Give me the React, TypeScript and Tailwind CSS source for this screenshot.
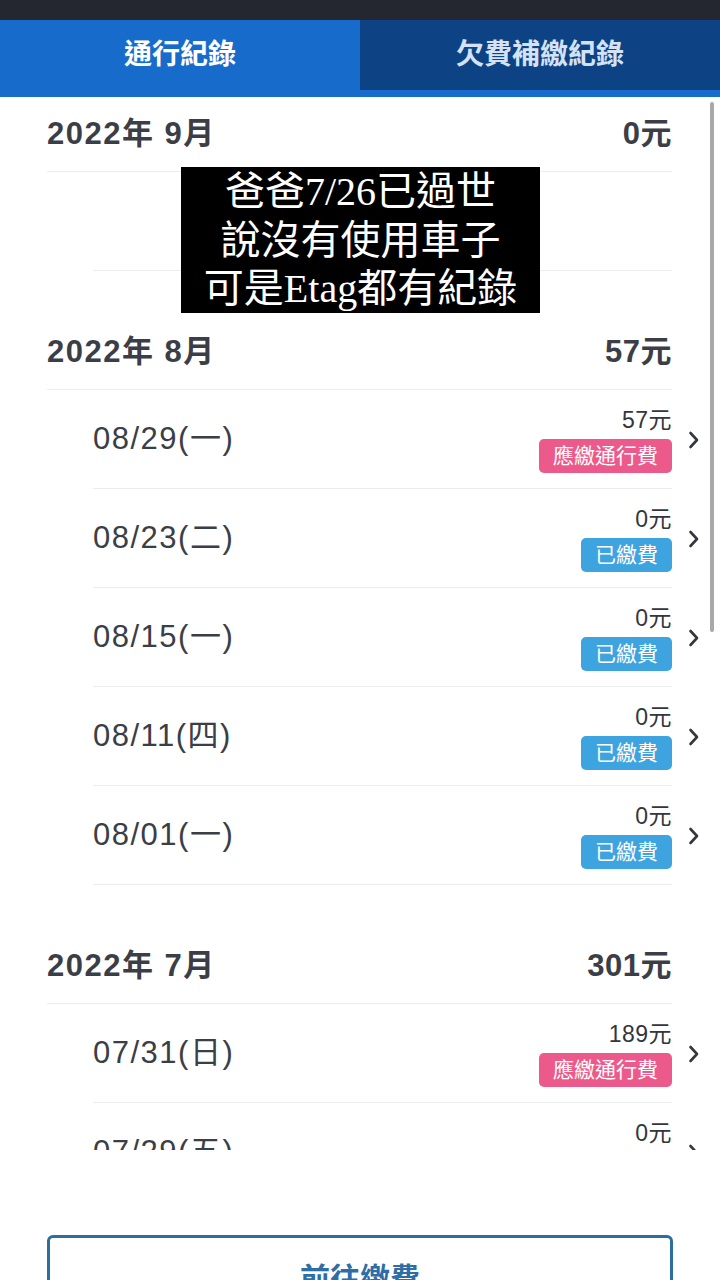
import React from 'react';

type Status = 'due' | 'paid';

interface Trip {
  date: string;
  amount: string;
  status: Status;
}

interface Month {
  label: string;
  total: string;
  trips: (Trip | null)[];
}

const FONT = '"Liberation Sans", "Noto Sans CJK TC", sans-serif';

const MONTHS: Month[] = [
  { label: '2022年 9月', total: '0元', trips: [null] },
  {
    label: '2022年 8月',
    total: '57元',
    trips: [
      { date: '08/29(一)', amount: '57元', status: 'due' },
      { date: '08/23(二)', amount: '0元', status: 'paid' },
      { date: '08/15(一)', amount: '0元', status: 'paid' },
      { date: '08/11(四)', amount: '0元', status: 'paid' },
      { date: '08/01(一)', amount: '0元', status: 'paid' },
    ],
  },
  {
    label: '2022年 7月',
    total: '301元',
    trips: [
      { date: '07/31(日)', amount: '189元', status: 'due' },
      { date: '07/29(五)', amount: '0元', status: 'paid' },
    ],
  },
];

function Chevron() {
  return (
    <svg width="12" height="20" viewBox="0 0 12 20" fill="none">
      <path d="M2.5 3 L9 10 L2.5 17" stroke="#34373d" strokeWidth="2.6" strokeLinecap="round" strokeLinejoin="round" />
    </svg>
  );
}

function Badge({ status }: { status: Status }) {
  if (status === 'due') {
    return (
      <span className="rounded-[5px] bg-[#ec5a8b] px-[14px] text-[21px] leading-[34px] text-white">
        應繳通行費
      </span>
    );
  }
  return (
    <span className="rounded-[5px] bg-[#3ea4e0] px-[14px] text-[21px] leading-[34px] text-white">
      已繳費
    </span>
  );
}

function TripRow({ trip }: { trip: Trip | null }) {
  return (
    <div className="flex h-[99px] items-center">
      <div className="ml-[46px] flex h-full flex-1 items-center justify-between border-b border-[#ededed]">
        {trip && (
          <>
            <span className="text-[31px] tracking-[1.5px] text-[#3a3e46]">{trip.date}</span>
            <div className="flex flex-col items-end gap-[6px] pt-[2px]">
              <span className="text-[23px] leading-[26px] tracking-[0.5px] text-[#33363c]">{trip.amount}</span>
              <Badge status={trip.status} />
            </div>
          </>
        )}
      </div>
      <div className="flex w-[28px] justify-end">{trip && <Chevron />}</div>
    </div>
  );
}

export default function App() {
  return (
    <div className="relative h-[1280px] w-[720px] overflow-hidden bg-white" style={{ fontFamily: FONT }}>
      {/* status bar */}
      <div className="h-[20px] bg-[#24272f]" />

      {/* tabs */}
      <div className="flex h-[70px]">
        <div className="flex flex-1 items-center justify-center bg-[#176bcb] text-[28px] font-bold text-white">
          通行紀錄
        </div>
        <div className="flex flex-1 items-center justify-center bg-[#0d4285] text-[28px] font-bold text-[#d3e2f5]">
          欠費補繳紀錄
        </div>
      </div>
      <div className="h-[7px] bg-[#176bcb]" />

      {/* list */}
      <div className="h-[1053px] overflow-hidden pl-[47px] pr-[20px]">
        {MONTHS.map((m, i) => (
          <div key={m.label} className={i === 0 ? '' : 'mt-[44px]'}>
            <div className="mr-[28px] flex h-[75px] items-center justify-between border-b border-[#ededed]">
              <span className="text-[31px] font-bold tracking-[1.5px] text-[#3b3e46]">{m.label}</span>
              <span className="text-[31px] font-bold tracking-[0.5px] text-[#3b3e46]">{m.total}</span>
            </div>
            {m.trips.map((t, j) => (
              <TripRow key={j} trip={t} />
            ))}
          </div>
        ))}
      </div>

      {/* bottom action */}
      <div className="mt-[85px] px-[47px]">
        <div className="flex h-[90px] justify-center rounded-[6px] border-[3px] border-[#2c6e9e] pt-[18px]">
          <span className="text-[30px] font-bold text-[#2f6da6]">前往繳費</span>
        </div>
      </div>

      {/* scrollbar */}
      <div className="absolute left-[710px] top-[102px] h-[530px] w-[4px] rounded-full bg-[#a8a8a8]" />

      {/* caption overlay */}
      <div className="absolute left-[181px] top-[167px] flex h-[146px] w-[359px] flex-col items-center justify-center bg-black text-[40px] leading-[48px] text-white">
        <div>
          爸爸<span style={{ fontFamily: '"Liberation Serif", serif' }}>7/26</span>已過世
        </div>
        <div>說沒有使用車子</div>
        <div>
          可是<span style={{ fontFamily: '"Liberation Serif", serif' }}>Etag</span>都有紀錄
        </div>
      </div>
    </div>
  );
}
